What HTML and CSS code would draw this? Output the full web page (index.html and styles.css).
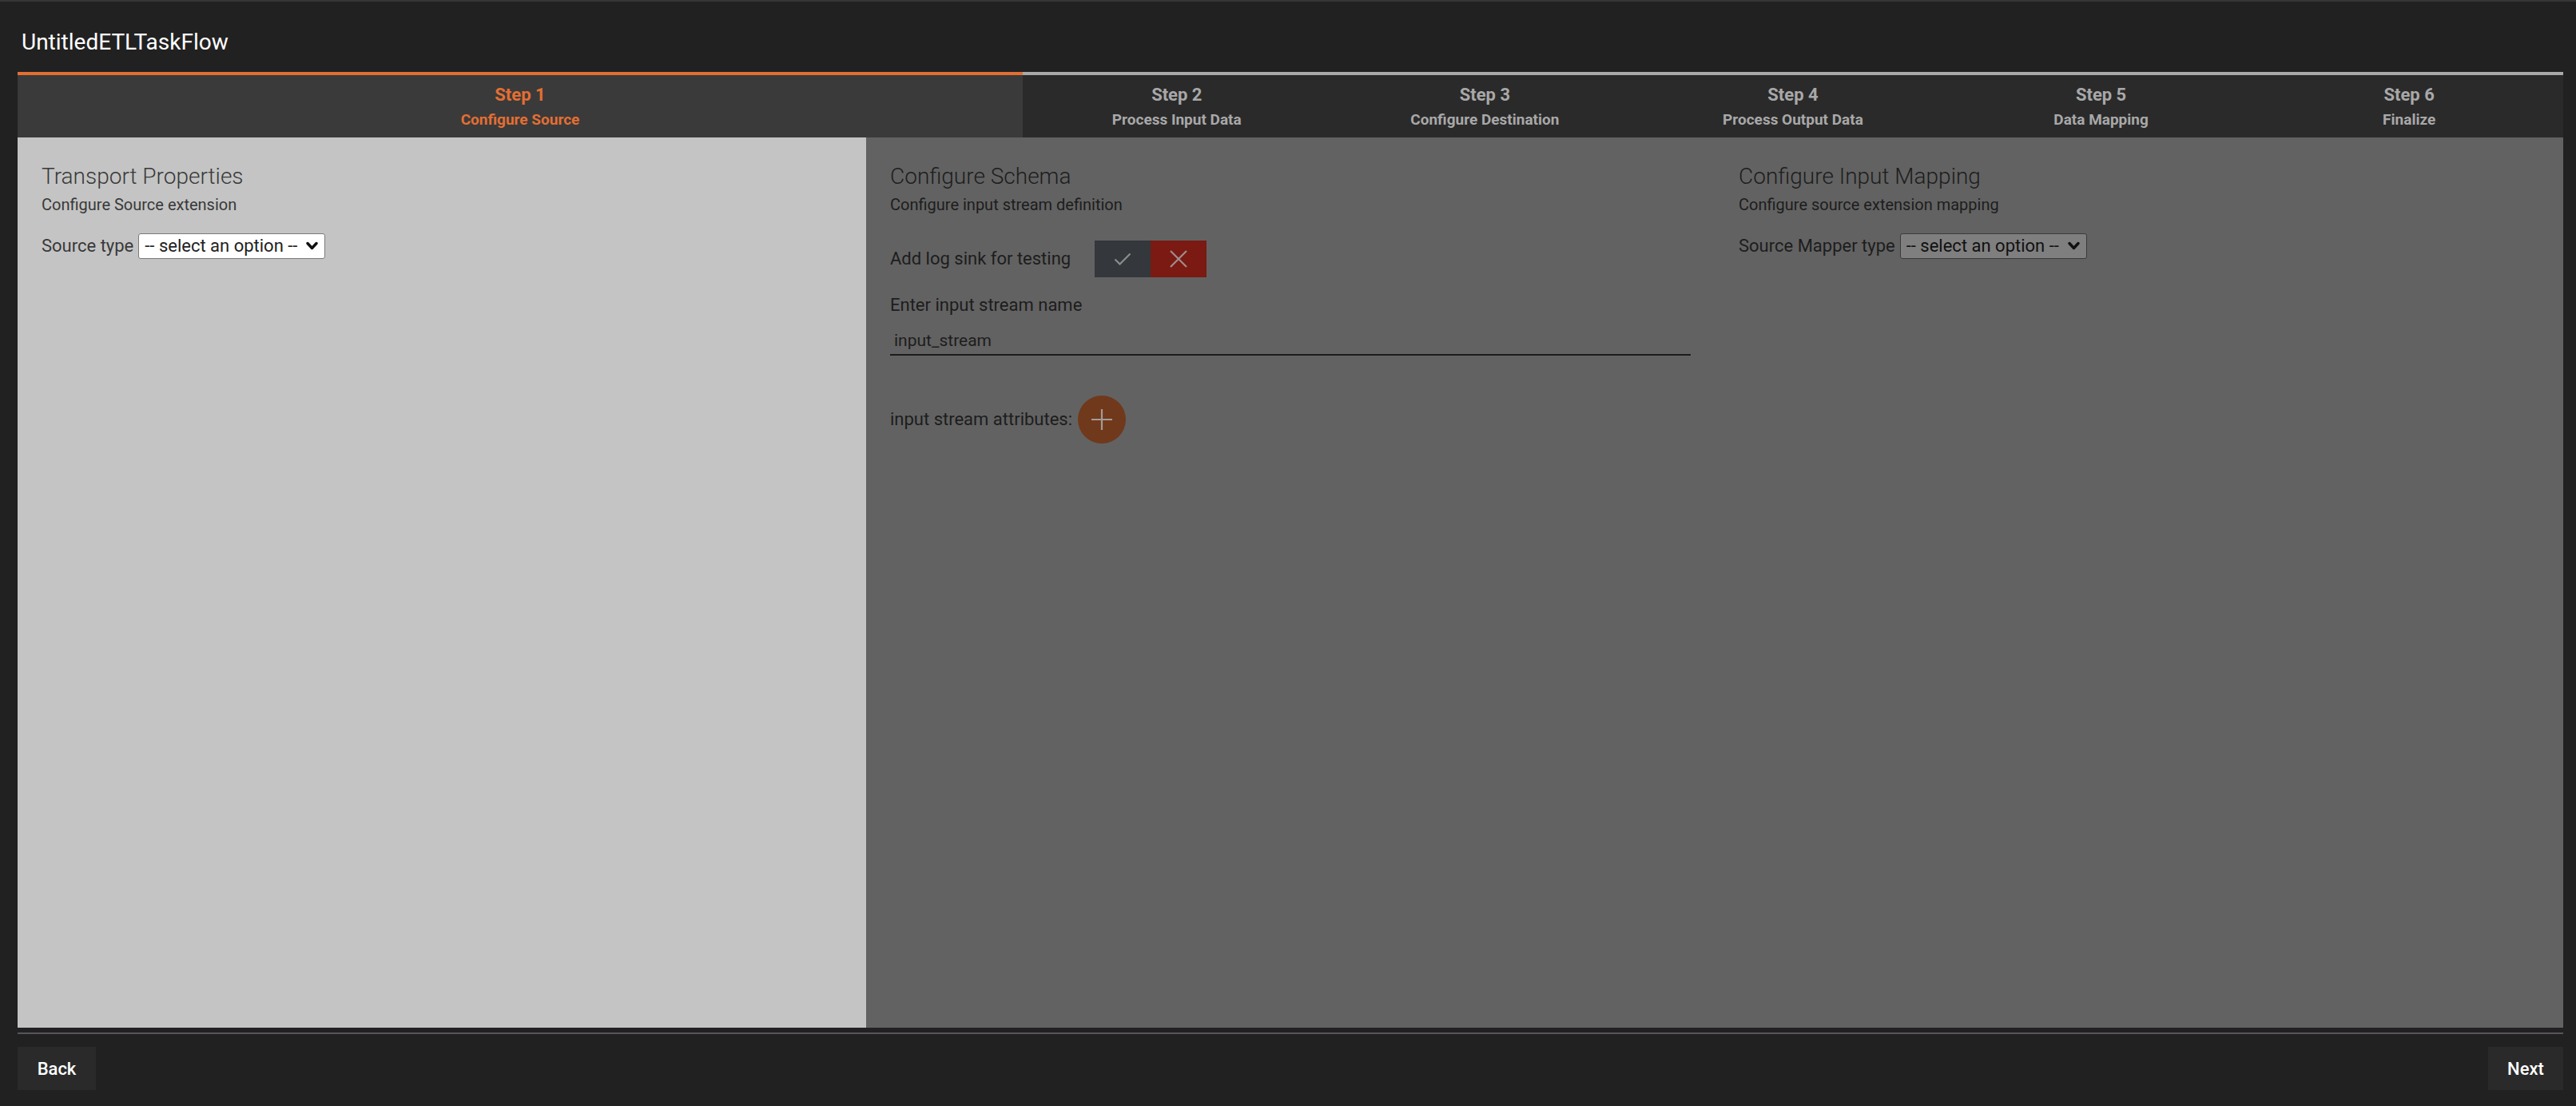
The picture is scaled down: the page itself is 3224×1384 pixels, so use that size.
FILE: index.html
```html
<!DOCTYPE html>
<html>
<head>
<meta charset="utf-8">
<title>UntitledETLTaskFlow</title>
<link rel="stylesheet" href="styles.css">
</head>
<body>
<div class="app">
  <header class="header">
    <h1 class="title">UntitledETLTaskFlow</h1>
  </header>

  <nav class="stepper">
    <div class="step active"><span class="step-num">Step 1</span><span class="step-name">Configure Source</span></div>
    <div class="step"><span class="step-num">Step 2</span><span class="step-name">Process Input Data</span></div>
    <div class="step"><span class="step-num">Step 3</span><span class="step-name">Configure Destination</span></div>
    <div class="step"><span class="step-num">Step 4</span><span class="step-name">Process Output Data</span></div>
    <div class="step"><span class="step-num">Step 5</span><span class="step-name">Data Mapping</span></div>
    <div class="step"><span class="step-num">Step 6</span><span class="step-name">Finalize</span></div>
  </nav>

  <main class="panels">
    <section class="panel">
      <h2 class="panel-title">Transport Properties</h2>
      <p class="panel-sub">Configure Source extension</p>
      <div class="field-row">
        <label class="label">Source type</label>
        <div class="select">
          <select><option>-- select an option --</option></select>
          <svg class="chev" width="15" height="11" viewBox="0 0 15 11"><path d="M2 2.5 L7.5 8.5 L13 2.5" fill="none" stroke="currentColor" stroke-width="3.4" stroke-linecap="round" stroke-linejoin="round"/></svg>
        </div>
      </div>
    </section>

    <section class="panel dim">
      <h2 class="panel-title">Configure Schema</h2>
      <p class="panel-sub">Configure input stream definition</p>
      <div class="toggle-row">
        <span class="label">Add log sink for testing</span>
        <div class="toggle">
          <span class="tg tg-yes"><svg width="22" height="16" viewBox="0 0 22 16"><path d="M1.5 8.5 L7.5 14.5 L20.5 1.5" fill="none" stroke="#8c8c8c" stroke-width="2.2"/></svg></span>
          <span class="tg tg-no"><svg width="22" height="22" viewBox="0 0 22 22"><path d="M1 1 L21 21 M21 1 L1 21" fill="none" stroke="#a08e8c" stroke-width="2.2"/></svg></span>
        </div>
      </div>
      <p class="label field-label">Enter input stream name</p>
      <input class="text-input" type="text" value="input_stream">
      <div class="attr-row">
        <span class="label">input stream attributes:</span>
        <span class="add-btn"><svg width="26" height="26" viewBox="0 0 26 26"><path d="M13 0 V26 M0 13 H26" fill="none" stroke="#a39b96" stroke-width="2.2"/></svg></span>
      </div>
    </section>

    <section class="panel dim">
      <h2 class="panel-title">Configure Input Mapping</h2>
      <p class="panel-sub">Configure source extension mapping</p>
      <div class="field-row">
        <label class="label">Source Mapper type</label>
        <div class="select">
          <select><option>-- select an option --</option></select>
          <svg class="chev" width="15" height="11" viewBox="0 0 15 11"><path d="M2 2.5 L7.5 8.5 L13 2.5" fill="none" stroke="currentColor" stroke-width="3.4" stroke-linecap="round" stroke-linejoin="round"/></svg>
        </div>
      </div>
    </section>
  </main>

  <footer class="footer">
    <button class="nav-btn back">Back</button>
    <button class="nav-btn next">Next</button>
  </footer>
</div>
</body>
</html>
```

FILE: styles.css
```css
* { box-sizing: border-box; }

html, body {
  margin: 0;
  padding: 0;
}

body {
  background: #212121;
  border-top: 2px solid #363636;
  font-family: Roboto, "Liberation Sans", sans-serif;
  color: #333;
}

.app {
  height: calc(100vh - 2px);
  display: flex;
  flex-direction: column;
}

.header {
  height: 88px;
  padding: 37px 0 0 27px;
}

.title {
  margin: 0;
  font-size: 28px;
  line-height: 28px;
  font-weight: 400;
  color: #ffffff;
}

.stepper {
  display: flex;
  height: 82px;
  margin: 0 16px 0 22px;
}

.step {
  flex: 1;
  display: flex;
  flex-direction: column;
  align-items: center;
  justify-content: center;
  gap: 7px;
  background: #2a2a2a;
  border-top: 4px solid #a9a9a9;
  color: #a8a8a8;
  font-weight: 700;
}

.step.active {
  flex: 0 0 1258px;
  background: #3a3a3a;
  border-top-color: #e36f33;
  color: #e36f33;
}

.step-num {
  font-size: 22px;
  line-height: 26px;
}

.step-name {
  font-size: 19px;
  line-height: 22px;
}

.panels {
  flex: 1;
  display: flex;
  margin: 0 16px 0 22px;
}

.panel {
  flex: 1;
  padding: 31.5px 30px 0 30px;
  background: #c4c4c4;
  color: #393939;
}

.panel.dim {
  background: #626262;
  color: #1d1d1d;
}

.panel-title {
  margin: 0;
  font-size: 28px;
  line-height: 34px;
  font-weight: 300;
}

.panel-sub {
  margin: 6px 0 0 0;
  font-size: 20px;
  line-height: 24px;
  font-weight: 400;
}

.label {
  font-size: 22px;
  line-height: 24px;
  font-weight: 400;
}

.field-row {
  margin-top: 24px;
  display: flex;
  align-items: center;
  gap: 6px;
}

.select {
  width: 234px;
  height: 32px;
  display: flex;
  align-items: center;
  padding: 0 8px 0 7px;
  background: #ffffff;
  border: 1px solid #7a7a7a;
  border-radius: 3px;
  color: #222;
}

.select select {
  flex: 1;
  min-width: 0;
  appearance: none;
  -webkit-appearance: none;
  border: none;
  background: transparent;
  padding: 0;
  margin: 0;
  font-family: Roboto, "Liberation Sans", sans-serif;
  font-size: 22px;
  font-weight: 400;
  color: #222;
  outline: none;
}

.chev { display: block; flex: none; color: #111; }

.dim .select {
  background: #7f7f7f;
  border-color: #3a3a3a;
}

.dim .select select { color: #111; }

.toggle-row {
  margin-top: 33px;
  display: flex;
  align-items: center;
  gap: 30px;
}

.toggle {
  display: flex;
  height: 46px;
}

.tg {
  width: 70px;
  height: 46px;
  display: flex;
  align-items: center;
  justify-content: center;
}

.tg-yes { background: #34373b; }
.tg-no { background: #7a1a13; }

.field-label {
  margin: 23px 0 0 0;
}

.text-input {
  display: block;
  width: 100%;
  height: 36px;
  margin-top: 15px;
  padding: 0 5px;
  border: none;
  border-bottom: 2px solid #1c1c1c;
  background: transparent;
  font-family: Roboto, "Liberation Sans", sans-serif;
  font-size: 21px;
  font-weight: 400;
  color: #1d1d1d;
  outline: none;
}

.attr-row {
  margin-top: 50px;
  display: flex;
  align-items: center;
  gap: 7px;
}

.add-btn {
  width: 60px;
  height: 60px;
  border-radius: 50%;
  background: #70391b;
  display: flex;
  align-items: center;
  justify-content: center;
}

.footer {
  margin: 6px 16px 0 22px;
  border-top: 2px solid #58535e;
  padding: 16px 0 20px 0;
  display: flex;
  justify-content: space-between;
}

.nav-btn {
  height: 54px;
  padding: 0;
  border: none;
  background: #2a2a2a;
  color: #ffffff;
  font-family: Roboto, "Liberation Sans", sans-serif;
  font-size: 22px;
  font-weight: 500;
}

.nav-btn.back { width: 98px; }
.nav-btn.next { width: 94px; }
```
